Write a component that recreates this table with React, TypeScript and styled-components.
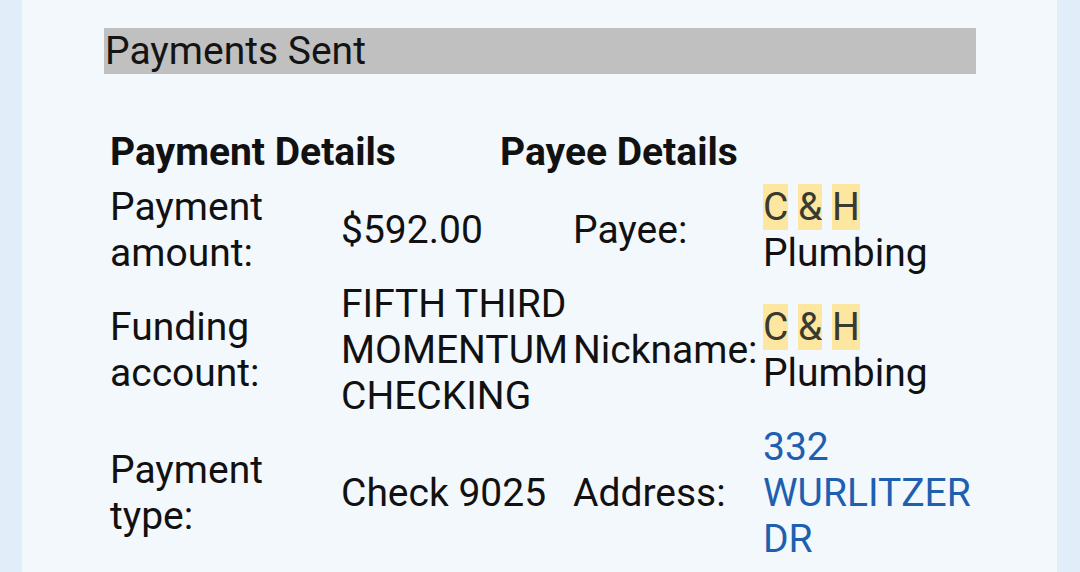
import * as React from 'react';
import styled, { createGlobalStyle } from 'styled-components';

// ----------------------------------------
// styles
// ----------------------------------------
const GlobalStyle = createGlobalStyle`
  html, body {
    margin: 0;
    padding: 0;
    background: #e1eef9;
    font-family: Roboto, "Liberation Sans", sans-serif;
    color: #111;
  }
`;

const Page = styled.div`
  padding: 0 23px 0 22px;
  height: 572px;
  overflow: hidden;
`;

const Panel = styled.div`
  background: #f3f8fd;
  padding: 28px 81px 0 82px;
  height: 100%;
  box-sizing: border-box;
`;

const TitleBar = styled.div`
  background: #c0c0c0;
  font-size: 39px;
  line-height: 46px;
  padding-left: 1px;
  color: #141414;
`;

const HeaderRow = styled.div`
  display: flex;
  margin-top: 55px;
  padding-left: 6px;
`;

const HeaderCell = styled.div<{ $width?: number }>`
  font-size: 39px;
  line-height: 46px;
  font-weight: 700;
  ${(p) => (p.$width ? `width: ${p.$width}px;` : '')}
`;

const Details = styled.div`
  display: grid;
  grid-template-columns: 231px 232px 190px 1fr;
  row-gap: 5px;
  margin-top: 9px;
  padding-left: 3px;
`;

const Cell = styled.div`
  display: flex;
  align-items: center;
  padding: 0 3px;
  font-size: 39px;
  line-height: 46px;
  min-width: 0;
`;

const CellText = styled.div`
  white-space: normal;
`;

const Mark = styled.span`
  background: #fde6a0;
  color: #3a3a30;
`;

const Link = styled.span`
  color: #1f5fb0;
`;

// ----------------------------------------
// data
// ----------------------------------------
type Row = {
  label: string;
  value: string;
  otherLabel: string;
  other: React.ReactNode;
};

const Highlighted: React.FC<{ text: string }> = ({ text }) => (
  <>
    {text.split(' ').map((part, i) => (
      <React.Fragment key={i}>
        {i > 0 && ' '}
        <Mark>{part}</Mark>
      </React.Fragment>
    ))}
  </>
);

const getRows = (): Row[] => [
  {
    label: 'Payment amount:',
    value: '$592.00',
    otherLabel: 'Payee:',
    other: (
      <>
        <Highlighted text="C & H" /> Plumbing
      </>
    ),
  },
  {
    label: 'Funding account:',
    value: 'FIFTH THIRD MOMENTUM CHECKING',
    otherLabel: 'Nickname:',
    other: (
      <>
        <Highlighted text="C & H" /> Plumbing
      </>
    ),
  },
  {
    label: 'Payment type:',
    value: 'Check 9025',
    otherLabel: 'Address:',
    other: <Link>332 WURLITZER DR</Link>,
  },
];

// ----------------------------------------
// component
// ----------------------------------------
export default function App() {
  const rows = getRows();

  return (
    <>
      <GlobalStyle />
      <Page>
        <Panel>
          <TitleBar>Payments Sent</TitleBar>

          <HeaderRow>
            <HeaderCell $width={390}>Payment Details</HeaderCell>
            <HeaderCell>Payee Details</HeaderCell>
          </HeaderRow>

          <Details>
            {rows.map((row) => (
              <React.Fragment key={row.label}>
                <Cell>
                  <CellText>{row.label}</CellText>
                </Cell>
                <Cell>
                  <CellText>{row.value}</CellText>
                </Cell>
                <Cell>
                  <CellText>{row.otherLabel}</CellText>
                </Cell>
                <Cell>
                  <CellText>{row.other}</CellText>
                </Cell>
              </React.Fragment>
            ))}
          </Details>
        </Panel>
      </Page>
    </>
  );
}
